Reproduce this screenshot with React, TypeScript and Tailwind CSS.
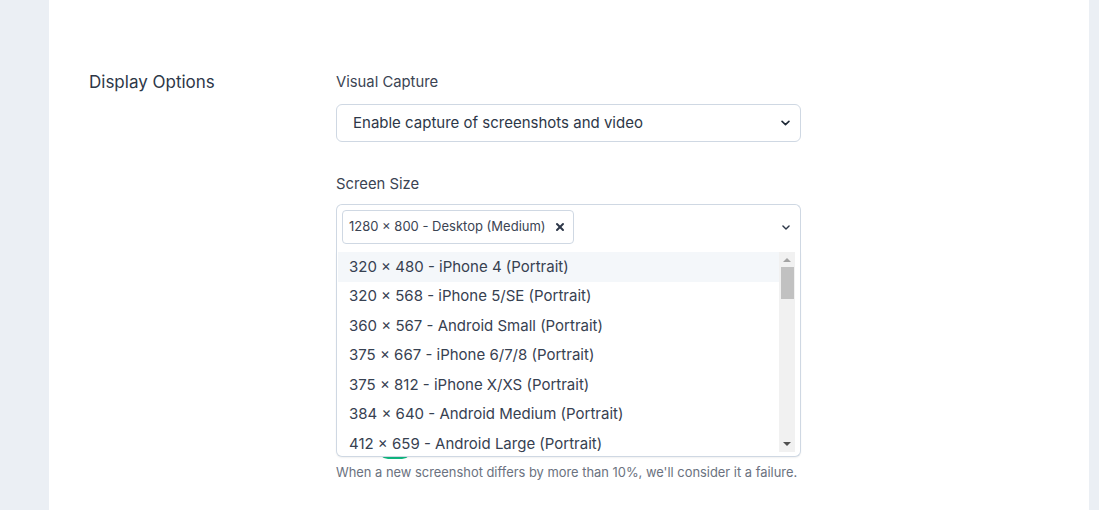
import { X } from 'lucide-react';

const screenSizes = [
  '320 × 480 - iPhone 4 (Portrait)',
  '320 × 568 - iPhone 5/SE (Portrait)',
  '360 × 567 - Android Small (Portrait)',
  '375 × 667 - iPhone 6/7/8 (Portrait)',
  '375 × 812 - iPhone X/XS (Portrait)',
  '384 × 640 - Android Medium (Portrait)',
  '412 × 659 - Android Large (Portrait)',
];

function Chevron({ className }: { className?: string }) {
  return (
    <svg viewBox="0 0 10 6" className={className} fill="none">
      <path d="M1.2 1.2 5 4.8 8.8 1.2" stroke="currentColor" strokeWidth="1.8" strokeLinecap="round" strokeLinejoin="round" />
    </svg>
  );
}

export default function App() {
  return (
    <div className="flex h-[510px] w-full bg-[#ebeff4] pl-[49px] pr-[10px] font-['Inter',sans-serif]">
      <section className="flex flex-1 bg-white pl-10 pt-[72px]">
        <div className="w-[247px]">
          <h2 className="text-[17px] leading-5 text-[#2d3748]">Display Options</h2>
        </div>

        <div className="flex w-[465px] flex-col">
          <label className="text-[14.8px] leading-5 text-[#3b4453]">Visual Capture</label>
          <div className="mt-3 flex h-[38px] items-center justify-between rounded-md border border-[#cfd8e3] pl-4 pr-[10px]">
            <span className="text-[15px] text-[#2d3748]">Enable capture of screenshots and video</span>
            <Chevron className="h-[6px] w-[9px] text-[#1f2937]" />
          </div>

          <label className="mt-8 text-[14.8px] leading-5 text-[#3b4453]">Screen Size</label>
          <div className="relative mt-[10px]">
            <div className="flex h-[48px] items-start justify-between rounded-t-md border-x border-t border-[#cfd8e3] pl-[5px] pr-[10px] pt-[5px]">
              <span className="flex h-[34px] items-center gap-[8px] rounded border border-[#cfd8e3] pl-[6px] pr-[7px] text-[13px] text-[#3b4453]">
                1280 × 800 - Desktop (Medium)
                <X className="h-[12px] w-[12px] text-[#2d3748]" strokeWidth={4} />
              </span>
              <Chevron className="mt-[15px] h-[5px] w-[8px] text-[#2d3748]" />
            </div>

            <div className="absolute left-0 right-0 top-full z-10 flex h-[205px] overflow-hidden rounded-b-md border-x border-b border-[#cfd8e3] bg-white pl-px pr-[5px] shadow-[0_1px_2px_rgba(0,0,0,0.06)]">
              <ul className="flex-1">
                {screenSizes.map((size, index) => (
                  <li
                    key={size}
                    className={`flex h-[29.5px] items-center pl-[11px] text-[15px] text-[#374151] ${index === 0 ? 'bg-[#f4f7fa]' : ''}`}
                  >
                    {size}
                  </li>
                ))}
              </ul>
              <div className="mb-[4px] flex w-[16px] flex-col items-center bg-[#f1f1f1]">
                <svg viewBox="0 0 8 4" className="mt-[6px] h-[4px] w-[8px] text-[#a3a3a3]">
                  <path d="M0 4 4 0 8 4Z" fill="currentColor" />
                </svg>
                <div className="mt-[5px] h-[32px] w-[13px] bg-[#c1c1c1]" />
                <div className="flex-1" />
                <svg viewBox="0 0 8 4" className="mb-[6px] h-[4px] w-[8px] text-[#505050]">
                  <path d="M0 0 8 0 4 4Z" fill="currentColor" />
                </svg>
              </div>
            </div>
          </div>

          <div className="mt-[187px] pl-[42px]">
            <span className="block h-5 w-[34px] rounded-full bg-[#10b981]" />
          </div>
          <p className="mt-[6px] whitespace-nowrap text-[12.9px] leading-4 text-[#6b7280]">
            When a new screenshot differs by more than 10%, we'll consider it a failure.
          </p>
        </div>
      </section>
    </div>
  );
}
